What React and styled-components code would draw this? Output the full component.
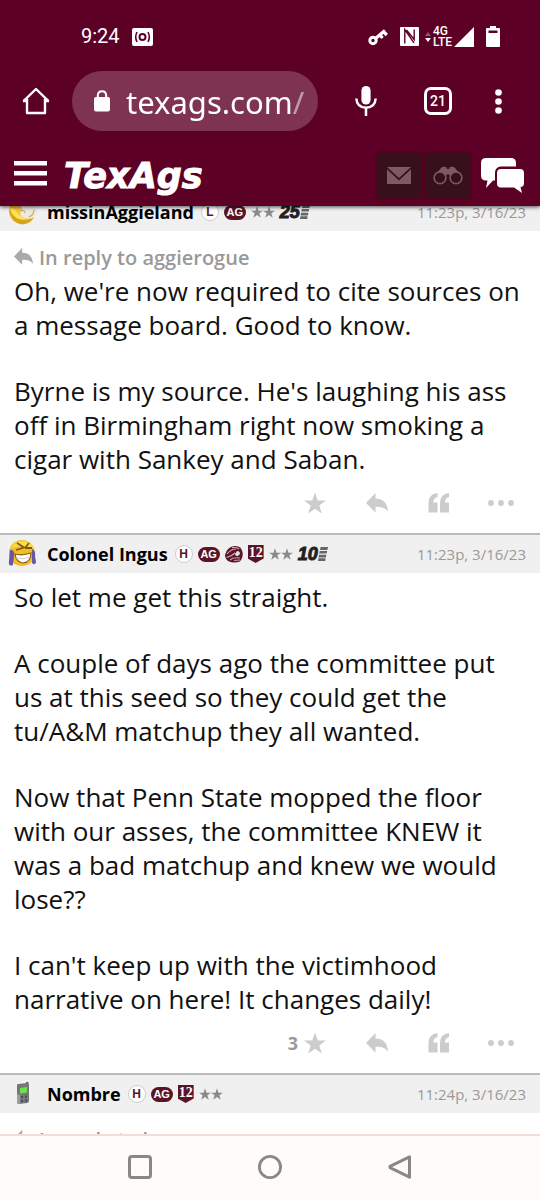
import React from "react";
import styled, { createGlobalStyle } from "styled-components";

const GlobalStyle = createGlobalStyle`
  * {
    box-sizing: border-box;
  }
  body {
    margin: 0;
    background: #fff;
    font-family: "Open Sans", "Noto Sans", sans-serif;
  }
  button {
    border: 0;
    padding: 0;
    background: none;
    font: inherit;
    color: inherit;
    cursor: pointer;
  }
  p {
    margin: 0;
  }
  svg {
    display: block;
    flex-shrink: 0;
  }
`;

const posts = [
  {
    id: 1,
    author: "missinAggieland",
    avatar: "moon",
    badges: ["L", "AG"],
    years: 25,
    time: "11:23p, 3/16/23",
    replyTo: "aggierogue",
    text: [
      "Oh, we're now required to cite sources on a message board. Good to know.",
      "Byrne is my source. He's laughing his ass off in Birmingham right now smoking a cigar with Sankey and Saban.",
    ],
  },
  {
    id: 2,
    author: "Colonel Ingus",
    avatar: "laugh",
    badges: ["H", "AG", "corps", "12"],
    years: 10,
    time: "11:23p, 3/16/23",
    stars: 3,
    text: [
      "So let me get this straight.",
      "A couple of days ago the committee put us at this seed so they could get the tu/A&M matchup they all wanted.",
      "Now that Penn State mopped the floor with our asses, the committee KNEW it was a bad matchup and knew we would lose??",
      "I can't keep up with the victimhood narrative on here! It changes daily!",
    ],
  },
  {
    id: 3,
    author: "Nombre",
    avatar: "phone",
    badges: ["H", "AG", "12"],
    time: "11:24p, 3/16/23",
    replyTo: "haas",
    text: [],
  },
];

const STAR = "M11 0 L13.7 8 H22 L15.3 13 L17.8 21 L11 16.2 L4.2 21 L6.7 13 L0 8 H8.3 Z";
const REPLY = "M0 10 L9.5 0 V5.6 C17 5.6 21.5 10 22 18.5 C18.8 14.4 15 13.6 9.5 13.8 V19.5 Z";

function ReplyIcon({ width, color }) {
  return (
    <svg width={width} height={width} viewBox="0 0 22 20" fill={color} aria-hidden="true">
      <path d={REPLY} />
    </svg>
  );
}

function StarIcon({ size, color }) {
  return (
    <svg width={size} height={size} viewBox="0 0 22 21" fill={color} aria-hidden="true">
      <path d={STAR} />
    </svg>
  );
}

function Avatar({ kind }) {
  if (kind === "phone") {
    return (
      <svg width="30" height="30" viewBox="0 0 30 30">
        <path d="M19 3 h2.5 v6 h-2.5z" fill="#666" />
        <path d="M10 6 Q10 5 11 5 L20 4 Q22 4 22 6 V22 Q22 24 20 24 L12 25 Q10 25 10 23 Z" fill="#75777a" />
        <path d="M10 15 L13 16 V24.8 H12 Q10 25 10 23Z" fill="#9b9da0" />
        <path d="M13 9 L20 8 V13.5 L13 14.5 Z" fill="#6fe04c" />
        <path d="M14 17 h2 v2 h-2z M18 16.6 h2 v2 h-2z M14 21 h2 v2 h-2z M18 20.6 h2 v2 h-2z" fill="#4a4c50" />
      </svg>
    );
  }
  if (kind === "moon") {
    return (
      <svg width="30" height="30" viewBox="0 0 30 30">
        <circle cx="15" cy="14" r="13" fill="#f4c62a" />
        <path d="M2 14 Q5 26 15 27.5 Q24 27 27 20 Q20 25 13 22 Q6 20 4 12Z" fill="#d9a11d" />
        <path d="M3 12 Q6 10 9 14 Q13 20 19 22 Q12 24 7 19 Q4 16 3 12Z" fill="#fbe35a" />
        <path d="M13 4 Q24 1 29 10 Q31 18 26 21 Q20 23 15 20 Q12 17 13 11Z" fill="#eeeae2" />
        <path d="M11 9 Q15 10 14 14 Q17 12 18 16 M22 20 Q27 18 27 13" fill="none" stroke="#cfa954" strokeWidth="1.2" />
      </svg>
    );
  }
  return (
    <svg width="30" height="30" viewBox="0 0 30 30">
      <circle cx="15" cy="14" r="13" fill="#f3bd22" />
      <path d="M4 9 Q9 1 17 2 Q25 3 27 10 Q20 5 4 9Z" fill="#fbdc4a" />
      <path d="M10 4 L17 8.5 L9 11 M18 9 L22 4 M18 9 L25 9" fill="none" stroke="#7d5a14" strokeWidth="1.8" />
      <path d="M8 15 Q15 17 24 14 Q24 23 16 24 Q9 23 8 15Z" fill="#fff" stroke="#8b5c18" strokeWidth="1.2" />
      <path d="M9 19 Q16 21 23 18" fill="none" stroke="#d6cfc2" />
      <path d="M3 11 Q8 10 7 17 L6 26 Q1 28 2 22Z M25 10 Q29 12 28 17 L29 23 Q28 27 25 24Z" fill="#6a55a8" />
    </svg>
  );
}

function CorpsBadge() {
  return (
    <svg width="18" height="18" viewBox="0 0 18 18" aria-hidden="true">
      <path d="M0 10 Q2 2 9 1 Q16 0 17.5 7 Q18.5 13 15 16.5 Q9 18.5 4 16.5 Q0 14 0 10Z" fill="#5a1426" />
      <path d="M2 9 Q6 4 11 4 M1.5 12.5 Q7 11 10 8 M7 2.6 Q11 1.6 14 4" fill="none" stroke="#cfaab4" strokeWidth="1.1" />
      <path d="M12 6 Q15 6 15 9 L13 11 Q10 11 10 9Z" fill="#ead9de" />
      <path d="M5 15 Q8 12 15 13 M9 15.5 L15 15" fill="none" stroke="#c79eaa" strokeWidth="1.2" />
    </svg>
  );
}

function Badge({ kind }) {
  if (kind === "AG") return <AgBadge>AG</AgBadge>;
  if (kind === "12") return <Shield>12</Shield>;
  if (kind === "corps") return <CorpsBadge />;
  return <Initial>{kind}</Initial>;
}

function Post({ post }) {
  return (
    <article>
      <PostHead>
        <Avatar kind={post.avatar} />
        <Author href="#profile">{post.author}</Author>
        <Badges>
          {post.badges.map((kind) => (
            <Badge key={kind} kind={kind} />
          ))}
          <Rating>
            <StarIcon size={12} color="#8a8a8a" />
            <StarIcon size={12} color="#8a8a8a" />
          </Rating>
          {post.years && (
            <Years>
              {post.years}
              <svg width="10" height="14" viewBox="0 0 10 14" fill="#666" aria-hidden="true">
                <path d="M2.6 0 H10 L9.4 3 H2Z M1.8 4 H9.2 L8.7 6.6 H1.2Z M1.1 7.8 H8.4 L7.9 10.4 H.5Z M.4 11.3 H7.7 L7.2 14 H0Z" />
              </svg>
            </Years>
          )}
        </Badges>
        <Time>{post.time}</Time>
      </PostHead>
      <PostBody>
        {post.replyTo && (
          <ReplyTo href="#parent">
            <ReplyIcon width={19} color="#aaa" />
            In reply to {post.replyTo}
          </ReplyTo>
        )}
        <Text>
          {post.text.map((line) => (
            <p key={line}>{line}</p>
          ))}
        </Text>
      </PostBody>
      <Actions>
        <StarAction aria-label="Star">
          {post.stars}
          <StarIcon size={22} color="#ccc" />
        </StarAction>
        <Action aria-label="Reply">
          <ReplyIcon width={22} color="#ccc" />
        </Action>
        <Action aria-label="Quote">
          <svg width="22" height="20" viewBox="0 0 22 20" fill="#ccc">
            <path d="M9.5 0 V4 Q5.5 4.8 5.3 9.5 H9.5 V19.5 H0.5 V10 Q.5 1 9.5 0Z" />
            <path d="M21 0 V4 Q17 4.8 16.8 9.5 H21 V19.5 H12 V10 Q12 1 21 0Z" />
          </svg>
        </Action>
        <Action aria-label="More">
          <svg width="26" height="6" viewBox="0 0 26 6" fill="#ccc">
            <circle cx="3" cy="3" r="2.9" />
            <circle cx="13" cy="3" r="2.9" />
            <circle cx="23" cy="3" r="2.9" />
          </svg>
        </Action>
      </Actions>
    </article>
  );
}

function StatusIcons() {
  return (
    <StatusGroup>
      <svg width="20" height="18" viewBox="0 0 20 18" fill="none" stroke="#fff">
        <circle cx="5" cy="12.5" r="3.2" strokeWidth="3" />
        <path d="M7.5 10.5 L17 2.5 M12 7 L14.5 10 M15.3 3.5 L18.8 7" strokeWidth="3.2" />
      </svg>
      <svg width="19" height="19" viewBox="0 0 19 19">
        <rect width="19" height="19" rx="1" fill="#fff" />
        <path d="M4.8 16.5 V2.6 L14 15.8 M6.5 3 L14.2 12.5 V2.5" fill="none" stroke="#5c0025" strokeWidth="1.4" />
      </svg>
      <NetworkGroup>
        <svg width="6" height="10" viewBox="0 0 6 10">
          <path d="M0 4 L3 0 L6 4Z" fill="#8f5870" />
          <path d="M0 6 H6 L3 10Z" fill="#fff" />
        </svg>
        <Network>
          <span>4G</span>
          <span>LTE</span>
        </Network>
        <svg width="20" height="20" viewBox="0 0 20 20">
          <path d="M20 0 V20 H0Z" fill="#fff" />
        </svg>
      </NetworkGroup>
      <svg width="14" height="21" viewBox="0 0 14 21">
        <path d="M4 0 H10 V2 H13 Q14 2 14 3 V20 Q14 21 13 21 H1 Q0 21 0 20 V3 Q0 2 1 2 H4Z" fill="#fff" />
        <path d="M2.5 4.5 H11.5 V7 H2.5Z" fill="#5c0025" />
      </svg>
    </StatusGroup>
  );
}

export default function App() {
  return (
    <Page>
      <GlobalStyle />
      <Header>
        <StatusBar>
          <Clock>
            9:24
            <svg width="21" height="18" viewBox="0 0 21 18">
              <rect width="21" height="18" rx="2" fill="#fff" />
              <g fill="none" stroke="#5c0025">
                <circle cx="10.5" cy="9" r="3" strokeWidth="2" />
                <path d="M5 4 Q2.4 9 5 14 M16 4 Q18.6 9 16 14" strokeWidth="1.6" />
              </g>
            </svg>
          </Clock>
          <StatusIcons />
        </StatusBar>

        <AddressBar>
          <BarButton $width={48} aria-label="Home">
            <svg width="28" height="28" viewBox="0 0 28 28" fill="none" stroke="#fff" strokeWidth="2.4">
              <path d="M1.5 14.2 L14 2 L26.5 14.2 M5 12 V26 H23 V12" strokeLinejoin="round" />
              <path d="M1 14 H5 M23 14 H27" />
            </svg>
          </BarButton>
          <UrlPill>
            <svg width="16" height="22" viewBox="0 0 16 22">
              <rect y="7" width="16" height="14.5" rx="2" fill="#fff" />
              <path d="M3.8 8 V5.5 Q4 1.2 8 1.2 Q12 1.2 12.2 5.5 V8" fill="none" stroke="#fff" strokeWidth="2" />
            </svg>
            <UrlInput aria-label="Address" defaultValue="texags.com/" />
          </UrlPill>
          <BarButton $width={72} aria-label="Voice search">
            <svg width="22" height="30" viewBox="0 0 22 30">
              <rect x="6.4" width="9.2" height="18.5" rx="4.6" fill="#fff" />
              <path d="M1.3 12.5 Q2 21.5 11 21.8 Q20 21.5 20.7 12.5 M11 22 V30" fill="none" stroke="#fff" strokeWidth="2.5" />
            </svg>
          </BarButton>
          <BarButton $width={72} aria-label="Tabs">
            <TabCount>21</TabCount>
          </BarButton>
          <BarButton $width={48} aria-label="Menu">
            <svg width="7" height="25" viewBox="0 0 7 25" fill="#fff">
              <circle cx="3.5" cy="3.5" r="3.3" />
              <circle cx="3.5" cy="12.5" r="3.3" />
              <circle cx="3.5" cy="21.5" r="3.3" />
            </svg>
          </BarButton>
        </AddressBar>

        <SiteBar>
          <button aria-label="Site menu">
            <svg width="33" height="25" viewBox="0 0 33 25" fill="#fff">
              <path d="M0 0 H33 V4.6 H0Z M0 10 H33 V14.6 H0Z M0 20 H33 V24.6 H0Z" />
            </svg>
          </button>
          <Logo href="#home">TexAgs</Logo>
          <SiteTools>
            <Tile aria-label="Messages">
              <svg width="24" height="17" viewBox="0 0 24 17" fill="#7d5a64">
                <path d="M0 0 H24 L12 11Z" />
                <path d="M0 2.2 L12 13.4 L24 2.2 V17 H0Z" />
              </svg>
            </Tile>
            <Tile aria-label="Watched threads">
              <svg width="30" height="19" viewBox="0 0 30 19">
                <path d="M1 11 L8 2 Q10 0 13 1 L14 3 H16 L17 1 Q20 0 22 2 L29 11 L22 13 L15 8 L8 13Z" fill="#7d5a64" />
                <circle cx="7" cy="11.8" r="5.9" fill="#38101b" stroke="#7d5a64" strokeWidth="1.6" />
                <circle cx="23" cy="11.8" r="5.9" fill="#38101b" stroke="#7d5a64" strokeWidth="1.6" />
              </svg>
            </Tile>
            <ForumButton aria-label="Forums">
              <svg width="43" height="35" viewBox="0 0 43 35" fill="#fff">
                <path d="M5 0 H30 Q35 0 35 5 V8.5 H20 Q14 9 14 15 V22.5 H12 L5 30 L6.5 22.5 H5 Q0 22.5 0 17.5 V5 Q0 0 5 0Z" />
                <path d="M20 11 H39 Q43 11 43 15 V25 Q43 29 39.5 29 L41 35 L33 29.5 H20 Q16 29.5 16 25.5 V15 Q16 11 20 11Z" />
              </svg>
            </ForumButton>
          </SiteTools>
        </SiteBar>
      </Header>

      <Feed>
        {posts.map((post) => (
          <Post key={post.id} post={post} />
        ))}
      </Feed>

      <NavBar>
        <button aria-label="Recent apps">
          <svg width="24" height="24" viewBox="0 0 24 24" fill="none" stroke="#8a8786" strokeWidth="3">
            <rect x="1.5" y="1.5" width="21" height="21" rx="2.5" />
          </svg>
        </button>
        <button aria-label="Home screen">
          <svg width="24" height="24" viewBox="0 0 24 24" fill="none" stroke="#8a8786" strokeWidth="2.8">
            <circle cx="12" cy="12" r="10.6" />
          </svg>
        </button>
        <button aria-label="Back">
          <svg width="24" height="24" viewBox="0 0 24 24" fill="none" stroke="#8a8786" strokeWidth="3">
            <path d="M21.5 1.8 V22.2 L2 12.6 V11.4Z" strokeLinejoin="round" />
          </svg>
        </button>
      </NavBar>
    </Page>
  );
}

const Page = styled.div`
  display: flex;
  flex-direction: column;
  height: 100vh;
`;

const Header = styled.header`
  position: relative;
  z-index: 1;
  background: #5c0025;
  color: #fff;
  box-shadow: 0 1px 4px rgba(0, 0, 0, 0.7);
`;

const StatusBar = styled.div`
  display: flex;
  align-items: center;
  justify-content: space-between;
  padding: 24px 40px 22px 81px;
`;

const Clock = styled.div`
  display: flex;
  align-items: center;
  gap: 12px;
  font-family: Roboto, sans-serif;
  font-size: 20px;
  line-height: 25px;
`;

const StatusGroup = styled.div`
  display: flex;
  align-items: center;
  gap: 12px;
`;

const NetworkGroup = styled.div`
  display: flex;
  align-items: center;
  gap: 2px;
  margin-left: -6px;
`;

const Network = styled.div`
  display: flex;
  flex-direction: column;
  font-family: Roboto, sans-serif;
  font-size: 12px;
  font-weight: 500;
  line-height: 11px;
`;

const AddressBar = styled.div`
  display: flex;
  padding: 0 18px 0 12px;
`;

const BarButton = styled.button`
  display: flex;
  align-items: center;
  justify-content: center;
  width: ${({ $width }) => $width}px;
`;

const UrlPill = styled.div`
  display: flex;
  flex: 1;
  align-items: center;
  gap: 16px;
  min-width: 0;
  height: 60px;
  margin: 0 12px;
  padding: 0 8px 0 22px;
  border-radius: 30px;
  background: #7d3351;
`;

const UrlInput = styled.input`
  flex: 1;
  min-width: 0;
  border: 0;
  padding: 2px 0 0;
  outline: 0;
  background: none;
  color: #fff;
  font-family: "Noto Sans", sans-serif;
  font-size: 31px;
  line-height: 40px;
  mask-image: linear-gradient(to right, #000 165px, rgba(0, 0, 0, 0.5) 167px);
`;

const TabCount = styled.span`
  display: flex;
  align-items: center;
  justify-content: center;
  width: 28px;
  height: 28px;
  border: 3px solid #fff;
  border-radius: 7px;
  font-family: Roboto, sans-serif;
  font-size: 14px;
  font-weight: 500;
`;

const SiteBar = styled.div`
  display: flex;
  align-items: center;
  padding: 22px 16px 8px 14px;

  > button {
    margin-bottom: 4px;
  }
`;

const Logo = styled.a`
  margin-left: 17px;
  color: #fff;
  font-family: "DejaVu Sans", sans-serif;
  font-size: 35px;
  font-weight: 700;
  font-style: italic;
  line-height: 40px;
  text-decoration: none;
  -webkit-text-stroke: 1px #fff;
`;

const SiteTools = styled.div`
  display: flex;
  align-items: center;
  gap: 5px;
  margin-left: auto;
`;

const Tile = styled.button`
  display: flex;
  align-items: center;
  justify-content: center;
  width: 44px;
  height: 45px;
  background: #38101b;
  box-shadow: 0 0 3px #38101b;
`;

const ForumButton = styled.button`
  margin-left: 6px;
`;

/* first post is scrolled part way under the header */
const Feed = styled.main`
  flex: 1;
  min-height: 0;
  margin-top: -15px;
  overflow: hidden;
`;

const PostHead = styled.div`
  display: flex;
  align-items: center;
  height: 40px;
  padding: 0 14px 0 7px;
  border-top: 2px solid #bbb;
  background: #f0f0f0;
`;

const Author = styled.a`
  margin-left: 10px;
  color: #000;
  font-size: 18px;
  font-weight: 700;
  text-decoration: none;
`;

const Badges = styled.div`
  display: flex;
  align-items: center;
  gap: 5px;
  margin-left: 7px;
`;

const Initial = styled.span`
  width: 18px;
  height: 18px;
  border: 1px solid #ccc;
  border-radius: 50%;
  background: #fff;
  color: #5a1426;
  font-family: "Liberation Sans", sans-serif;
  font-size: 12px;
  font-weight: 700;
  line-height: 16px;
  text-align: center;
`;

const AgBadge = styled.span`
  width: 22px;
  border-radius: 8px;
  background: #5a1426;
  color: #fff;
  font-family: "Liberation Sans", sans-serif;
  font-size: 11px;
  font-weight: 700;
  line-height: 15px;
  text-align: center;
`;

const Shield = styled.span`
  width: 16px;
  height: 18px;
  background: #5a1426;
  clip-path: polygon(0 0, 100% 0, 100% 75%, 50% 100%, 0 75%);
  color: #fff;
  font-family: "Liberation Serif", serif;
  font-size: 14px;
  font-weight: 700;
  line-height: 15px;
  text-align: center;
`;

const Rating = styled.span`
  display: flex;
`;

const Years = styled.span`
  display: flex;
  align-items: center;
  color: #222;
  font-family: "Liberation Sans", sans-serif;
  font-size: 18px;
  font-weight: 700;
  font-style: italic;
  line-height: 20px;
  -webkit-text-stroke: 1px #222;
`;

const Time = styled.time`
  margin-left: auto;
  color: #999;
  font-size: 15px;
`;

const PostBody = styled.div`
  padding: 7px 14px 0;
`;

const ReplyTo = styled.a`
  display: flex;
  align-items: center;
  gap: 6px;
  padding-top: 4px;
  color: #999;
  font-size: 20px;
  font-weight: 600;
  line-height: 32px;
  text-decoration: none;

  svg {
    margin-bottom: 4px;
  }
`;

const Text = styled.div`
  display: flex;
  flex-direction: column;
  gap: 32px;
  color: #111;
  font-size: 26px;
  line-height: 34px;
`;

const Actions = styled.div`
  display: flex;
  justify-content: flex-end;
  height: 57px;
  padding: 0 8px 3px 0;
`;

const Action = styled.button`
  display: flex;
  align-items: center;
  justify-content: center;
  width: 62px;
`;

const StarAction = styled.button`
  display: flex;
  align-items: center;
  gap: 6px;
  padding: 0 20px;
  color: #999;
  font-size: 18px;
  font-weight: 700;
`;

const NavBar = styled.nav`
  display: flex;
  padding: 19px 14% 21px;
  border-top: 2px solid #f6dcd9;
  background: #fffbfa;

  button {
    display: flex;
    flex: 1;
    justify-content: center;
  }
`;
